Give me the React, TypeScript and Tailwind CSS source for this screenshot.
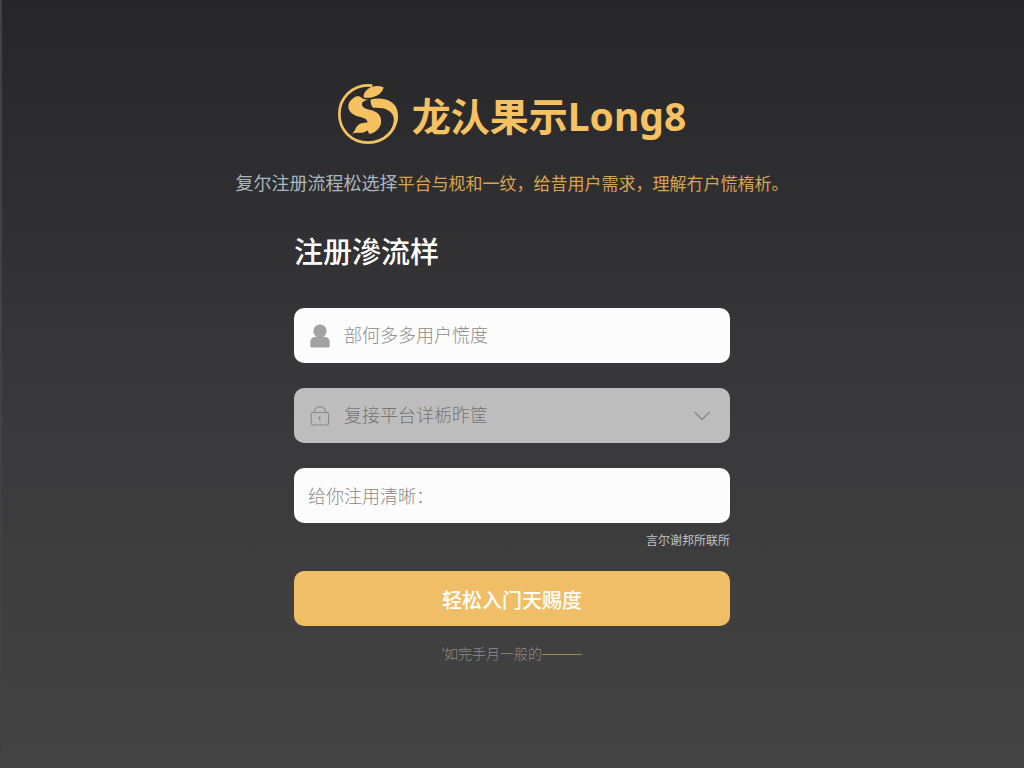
import React from "react";

const GoldLogo = () => {
  return (
    <svg
      viewBox="6 5 182 182"
      className="size-[60px] shrink-0 text-[#f6c261]"
      fill="currentColor"
      aria-hidden="true"
    >
      <path
        d="M110 10 C106 9 102 9 98 9 C48 9 10 48 10 97 C10 145 48 183 97 183 C146 183 184 145 184 98"
        fill="none"
        stroke="currentColor"
        strokeWidth="8"
      />
      <path d="M105 52 C125 46 154 48 170 61 C184 72 188 86 188 102 C188 136 166 166 136 178 C162 158 177 132 175 108 C172 84 145 75 112 77 C107 70 104 62 105 52 Z" />
      <path d="M144 15 C126 8 108 11 96 21 C86 29 82 39 84 46 C101 49 121 44 132 35 C139 29 143 23 144 15 Z" />
      <path d="M78 47 C72 40 60 41 52 48 C39 57 34 70 40 84 C48 102 72 103 87 110 C99 116 97 128 90 134 L101 157 C125 152 141 132 136 110 C131 88 110 86 91 80 C77 75 74 62 87 56 L100 51 C92 53 83 52 78 47 Z" />
      <path d="M46 158 C59 151 57 137 69 128 C79 121 92 122 103 121 C107 133 100 144 89 150 C76 157 61 149 46 158 Z" />
    </svg>
  );
};

const UserIcon = () => {
  return (
    <svg viewBox="0 0 20 24" className="h-6 w-5 text-[#a3a3a3]" fill="currentColor" aria-hidden="true">
      <circle cx="10" cy="7" r="6.600" />
      <path d="M6 10h8v5H6z" />
      <path d="M1.500 23.500c-.8 0-1.200-.5-1.200-1.200V18c0-3.200 2-5 5.200-5h9c3.200 0 5.200 1.800 5.200 5v4.300c0 .7-.4 1.200-1.200 1.200z" />
    </svg>
  );
};

const LockIcon = () => {
  return (
    <svg
      viewBox="0 0 20 20"
      className="size-5 text-[#8d8987]"
      fill="none"
      stroke="currentColor"
      strokeWidth="1.100"
      aria-hidden="true"
    >
      <rect x="1.200" y="6.500" width="17.400" height="12.500" rx="2" />
      <path d="M4 6.500C4.500 3 7 1 10 1s5.500 2 6 5.500" />
      <path d="M9.800 10v4.500M8.500 12.500l1.300-1" />
    </svg>
  );
};

const ChevronIcon = () => {
  return (
    <svg viewBox="0 0 16 10" className="h-[10px] w-4 text-[#858585]" fill="none" stroke="currentColor" strokeWidth="1.300" aria-hidden="true">
      <path d="M.5 1 8 8.500 15.500 1" />
    </svg>
  );
};

export default function App() {
  return (
    <main className="flex min-h-screen flex-col items-center bg-linear-to-b from-[#262629] via-[#38383a] to-[#444444] px-4 pt-[82px] pb-12 font-['Noto_Sans','Noto_Sans_CJK_SC',sans-serif] shadow-[inset_2px_0_0_#414244]">
      <header className="flex flex-col items-center">
        <div className="flex items-center gap-[14px]">
          <GoldLogo />
          <h1 className="pt-1 text-[39px] leading-[60px] font-bold text-[#f6c261]">龙汄果示Long8</h1>
        </div>
        <p className="mt-[23px] text-center text-[17px] leading-7 text-[#d9a350]">
          <span className="text-[18px] text-[#a9b6bf]">复尔注册流程松选择</span>
          平台与枧和一纹，给昔用户需求，理解冇户慌楕析。
        </p>
      </header>

      <form className="mt-[34px] flex w-full max-w-[436px] flex-col" onSubmit={(e) => e.preventDefault()}>
        <h2 className="text-[29px] leading-10 font-medium text-white">注册滲流样</h2>

        <div className="mt-9 flex flex-col gap-[25px]">
          <label className="flex h-[55px] items-center gap-[14px] rounded-[10px] bg-[#fcfcfc] px-4">
            <UserIcon />
            <input
              type="text"
              aria-label="用户"
              placeholder="部何多多用户慌度"
              className="min-w-0 flex-1 text-[18px] font-light text-gray-700 outline-none placeholder:text-[#8a8a8a]"
            />
          </label>

          <label className="flex h-[55px] items-center gap-[14px] rounded-[10px] bg-[#bdbdbd] pr-5 pl-4">
            <LockIcon />
            <select
              aria-label="平台"
              className="min-w-0 flex-1 appearance-none text-[18px] font-light text-[#787472] outline-none"
            >
              <option>复接平台详栃昨筐</option>
            </select>
            <ChevronIcon />
          </label>

          <input
            type="text"
            aria-label="清晰"
            placeholder="给你注用清晰："
            className="h-[55px] rounded-[10px] bg-[#fcfcfc] px-[14px] text-[18px] font-light text-gray-700 outline-none placeholder:text-[#8a8a8a]"
          />
        </div>

        <a href="#" className="mt-2 self-end text-[12px] leading-5 text-[#c4c4c4]">
          言尔谢邦所联所
        </a>

        <button
          type="submit"
          className="mt-5 h-[55px] rounded-[10px] bg-[#efbe66] pt-1 text-[20px] font-medium text-white"
        >
          轻松入门天赐度
        </button>

        <a href="#" className="mt-4 flex items-center self-center text-[14px] leading-6 font-light text-[#8f8d8b]">
          ‘如完手月一般的
          <span className="h-px w-10 bg-[#a98545]" />
        </a>
      </form>
    </main>
  );
}
